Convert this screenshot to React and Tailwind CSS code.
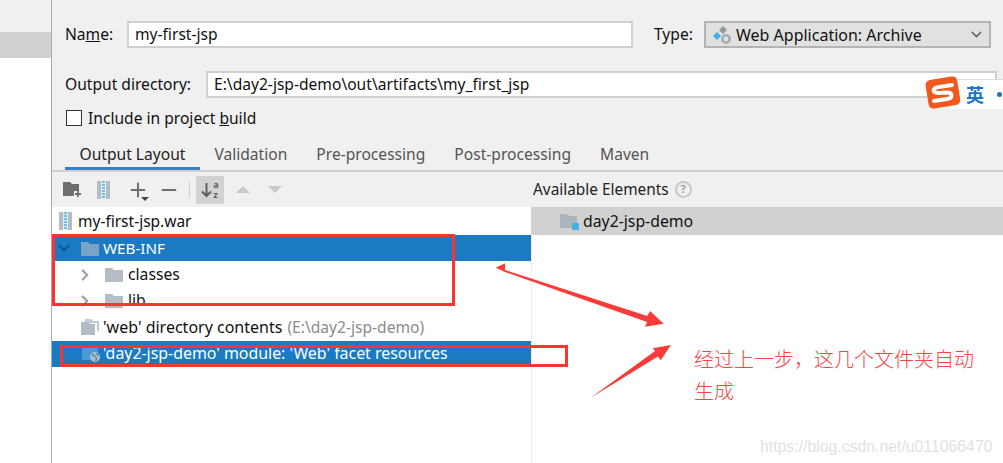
import React from 'react';
import { ChevronDown, ChevronRight, Plus, Minus } from 'lucide-react';

const font = { fontFamily: '"Noto Sans", "Noto Sans CJK SC", sans-serif' };

const Folder = ({ className = 'fill-[#b4bdc3]' }) => (
  <svg width="18" height="15" viewBox="0 0 18 15" className={className}>
    <path d="M0 1h7l2 2h9v12H0z" />
  </svg>
);

const Zip = ({ h = 18 }) => (
  <svg width="13" height={h} viewBox="0 0 13 18">
    <rect x="0" y="0" width="13" height="18" fill="#b4bdc3" />
    <rect x="4" y="0" width="5" height="18" fill="#e4eef2" />
    <path d="M5 1h3M5 4h3M5 7h3M5 10h3M5 13h3M5 16h3" stroke="#45b1dc" strokeWidth="1.6" />
  </svg>
);

const Row = ({ selected, indent, children }) => (
  <div className={`flex h-[26.4px] items-center ${indent} ${selected ? 'bg-[#1a7bc2] text-white' : 'text-[#111]'}`}>
    {children}
  </div>
);

const Tab = ({ active, children }) => (
  <div className={`flex h-[28px] items-center px-[14.5px] pb-[3px] text-[15.6px] ${active ? 'border-b-[3px] border-[#3b7fc4] pt-[3px] pb-0 text-[#222]' : 'text-[#555]'}`}>
    {children}
  </div>
);

const Toolbar = () => (
  <div className="flex h-[35px] items-center pl-[11px]">
    <svg width="19" height="17" viewBox="0 0 19 17">
      <path d="M0 1h7l2 2h7v7h-5v5H0z" fill="#6e6e6e" />
      <path d="M15 10v6M12 13h6" stroke="#6e6e6e" strokeWidth="1.8" />
    </svg>
    <span className="ml-[15px] flex"><Zip /></span>
    <span className="relative ml-[17px] flex">
      <Plus size={22} strokeWidth={2.2} className="text-[#6e6e6e]" />
      <span className="absolute top-[18px] left-[14px] h-0 w-0 border-x-[4px] border-t-[4px] border-x-transparent border-t-[#444]" />
    </span>
    <Minus size={22} strokeWidth={2.2} className="ml-[9px] text-[#6e6e6e]" />
    <span className="ml-[9px] h-[16px] w-px bg-[#cfcfcf]" />
    <span className="ml-[6px] flex h-[28px] w-[28px] items-center justify-center gap-[1px] bg-[#d2d2d2]">
      <svg width="11" height="16" viewBox="0 0 11 16" fill="none">
        <path d="M5.5 1v13M1 9.5l4.5 4.5L10 9.5" stroke="#5f5f5f" strokeWidth="2" />
      </svg>
      <span className="flex flex-col gap-[1px] text-[9px] leading-[9px] font-bold text-[#5f5f5f]">
        <span>a</span>
        <span>z</span>
      </span>
    </span>
    <span className="ml-[12px] h-0 w-0 border-x-[7px] border-b-[7px] border-x-transparent border-b-[#c9c9c9]" />
    <span className="ml-[18px] h-0 w-0 border-x-[7px] border-t-[7px] border-x-transparent border-t-[#c9c9c9]" />
  </div>
);

const Tree = () => (
  <div className="flex-1 bg-white text-[15.7px]">
    <div className="flex h-[28px] items-center pl-[7px] text-[#111]">
      <Zip />
      <span className="ml-[6px] pt-[2px] text-[15.5px]">my-first-jsp.war</span>
    </div>
    <Row selected indent="pl-[3px]">
      <ChevronDown size={18} strokeWidth={3} className="text-[#0f5a8f]" />
      <span className="ml-[8px] flex"><Folder className="fill-[#7ba3c4]" /></span>
      <span className="ml-[4px] text-[15.2px]">WEB-INF</span>
    </Row>
    <Row indent="pl-[24px]">
      <ChevronRight size={18} strokeWidth={3} className="text-[#a0a0a0]" />
      <span className="ml-[11px] flex"><Folder /></span>
      <span className="ml-[5px]">classes</span>
    </Row>
    <Row indent="pl-[24px]">
      <ChevronRight size={18} strokeWidth={3} className="text-[#a0a0a0]" />
      <span className="ml-[11px] flex"><Folder /></span>
      <span className="ml-[5px]">lib</span>
    </Row>
    <Row indent="pl-[29px]">
      <svg width="18" height="16" viewBox="0 0 18 16">
        <path d="M4 0h6l2 2h6v10h-2V4H4z" fill="#c4cbd0" />
        <path d="M0 3h7l2 2h5v11H0z" fill="#b4bdc3" />
      </svg>
      <span className="ml-[4px] text-[16px]">'web' directory contents</span>
      <span className="ml-[5px] text-[15.6px] text-[#8b8b8b]">(E:\day2-jsp-demo)</span>
    </Row>
    <Row selected indent="pl-[30px]">
      <svg width="18" height="17" viewBox="0 0 18 17" fill="none">
        <path d="M0 1h7l2 2h7v12H0z" fill="#4a9bd2" />
        <circle cx="13" cy="12" r="5" fill="#a9bfce" />
        <path d="M10 9.5c2 .5 2 2 3.5 2.500s1 2.500 0 4M15 8c-.5 1.500.5 2 2 2.500" stroke="#4d7f9f" strokeWidth="1.3" />
      </svg>
      <span className="ml-[3px] text-[15.9px]">'day2-jsp-demo' module: 'Web' facet resources</span>
    </Row>
  </div>
);

const Available = () => (
  <div className="flex flex-1 flex-col">
    <div className="flex h-[35px] items-center pl-[2px] text-[15.4px] text-[#222]">
      Available Elements
      <span className="ml-[6px] flex h-[17px] w-[17px] items-center justify-center rounded-full border-2 border-[#c3c8cc] text-[11px] font-bold text-[#9aa1a6]">?</span>
    </div>
    <div className="flex h-[28px] items-center bg-[#d1d1d1] pl-[29px] text-[15.8px] text-[#111]">
      <svg width="19" height="17" viewBox="0 0 19 17">
        <path d="M0 1h7l2 2h8v12H0z" fill="#a9b4bb" />
        <rect x="12" y="10" width="7" height="7" fill="#45b1e0" />
      </svg>
      <span className="ml-[4px] pt-[1px]">day2-jsp-demo</span>
    </div>
    <div className="flex-1 border-l border-[#ececec] bg-white" />
  </div>
);

const Annotations = () => (
  <>
    <div className="absolute top-[234px] left-[52px] h-[72px] w-[403px] border-[3px] border-[#fb3333]" />
    <div className="absolute top-[345px] left-[60px] h-[22px] w-[508px] border-[3px] border-[#fb3333]" />
    <svg width="1003" height="463" className="absolute top-0 left-0">
      <path d="M495.7 267.7 L505 263.3 L505 270 L647.3 316 L650 311 L663.7 323.7 L645 326.7 L647 322 L505 272 Z" fill="#fb3a3a" />
      <path d="M590.7 397.7 L655 351 L652.7 348.3 L671 345 L660.7 360.3 L658 356.5 Z" fill="#fb3a3a" />
    </svg>
    <div className="absolute top-[343px] left-[694px] w-[285px] text-[20px] leading-[32px] font-light text-[#f54545]" style={{ fontFamily: '"Noto Sans CJK SC", sans-serif' }}>
      经过上一步，这几个文件夹自动生成
    </div>
    <div className="absolute top-[435px] left-[760px] text-[15.8px] text-[#e2e2e2]" style={{ fontFamily: '"Liberation Sans", sans-serif' }}>
      https://blog.csdn.net/u011066470
    </div>
    <div className="absolute top-[79px] left-[950px] flex h-[30px] w-[53px] items-center border-t border-[#dcdcdc] bg-white pl-[16px]">
      <span className="text-[18px] font-bold text-[#1f74c4]" style={{ fontFamily: '"Noto Sans CJK SC", sans-serif' }}>英</span>
      <span className="ml-[13px] h-[5px] w-[5px] shrink-0 rounded-full bg-[#1f74c4]" />
    </div>
    <svg width="38" height="36" viewBox="0 0 38 36" className="absolute top-[75px] left-[924px]">
      <rect x="3" y="3" width="32" height="29" rx="5" fill="#f2571c" transform="rotate(-9 19 18)" />
      <path d="M28 10 L15 12 C8 13 8 18 14 18 L23 17.5 C29 17.5 29 23 23 24 L10 26" fill="none" stroke="#fff" strokeWidth="4" strokeLinecap="round" />
    </svg>
  </>
);

export default function App() {
  return (
    <div className="relative flex h-[463px] w-[1003px] overflow-hidden bg-white" style={font}>
      <div className="flex w-[52px] flex-col border-r border-[#a9a9a9]">
        <div className="h-[32px] bg-[#f0f0f0]" />
        <div className="h-[26px] bg-[#d1d1d1]" />
      </div>
      <div className="flex flex-1 flex-col">
        <div className="bg-[#f0f0f0] pt-[21px] text-[15.6px] text-[#111]">
          <div className="flex h-[27px] items-center pl-[13px]">
            <span className="w-[62px]">Na<u>m</u>e:</span>
            <div className="flex h-[27px] w-[506px] items-center border-2 border-[#d0d0d0] bg-white pt-[1px] pl-[6px]">my-first-jsp</div>
            <span className="ml-[21px] w-[50px]">Type:</span>
            <div className="flex h-[27px] w-[287px] items-center border-2 border-[#b4b4b4] bg-[#e1e1e1] pl-[6px]">
              <svg width="20" height="20" viewBox="0 0 20 20">
                <path d="M5 7l4 4-4 4-4-4z" fill="#45b1e0" />
                <path d="M11 1l4 4-4 4-4-4z" fill="#8f9ba3" />
                <circle cx="14" cy="14" r="5" fill="#a4adb3" />
                <circle cx="14" cy="14" r="2.4" fill="#e1e1e1" />
              </svg>
              <span className="ml-[4px] text-[16px]">Web Application: Archive</span>
              <ChevronDown size={17} className="mr-[4px] ml-auto text-[#666]" />
            </div>
          </div>
          <div className="mt-[23px] flex h-[27px] items-center pl-[13px]">
            <span className="w-[141px]">Output directory:</span>
            <div className="flex h-[27px] w-[791px] items-center border-2 border-[#d0d0d0] bg-white pt-[1px] pl-[6px]">E:\day2-jsp-demo\out\artifacts\my_first_jsp</div>
          </div>
          <div className="mt-[12px] flex h-[16px] items-center pl-[14px]">
            <span className="h-[16px] w-[16px] border border-[#333] bg-white" />
            <span className="ml-[6px] pt-[1px]">Include in project <u>b</u>uild</span>
          </div>
          <div className="mt-[16px] flex border-b-2 border-[#d0d0d0] pl-[13px]">
            <Tab active>Output Layout</Tab>
            <Tab>Validation</Tab>
            <Tab>Pre-processing</Tab>
            <Tab>Post-processing</Tab>
            <Tab>Maven</Tab>
          </div>
        </div>
        <div className="flex flex-1 bg-[#f0f0f0]">
          <div className="flex w-[479px] flex-col">
            <Toolbar />
            <Tree />
          </div>
          <Available />
        </div>
      </div>
      <Annotations />
    </div>
  );
}
